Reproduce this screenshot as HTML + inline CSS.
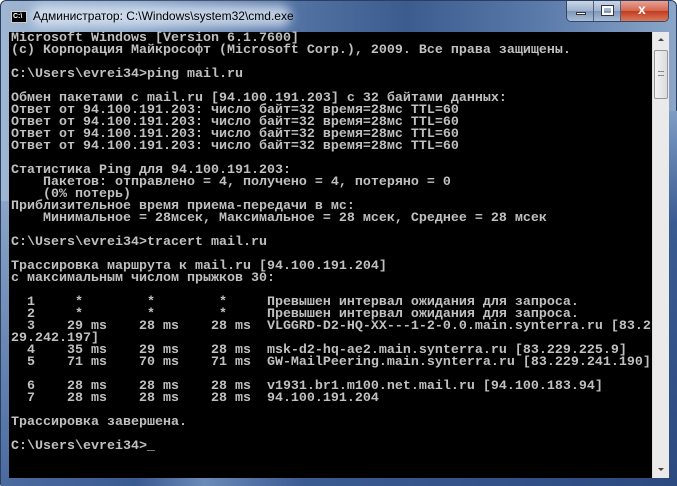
<!DOCTYPE html>
<html><head><meta charset="utf-8"><style>
*{margin:0;padding:0;box-sizing:border-box}
html,body{width:677px;height:486px;overflow:hidden;background:#fff}
.win{position:absolute;left:0;top:0;width:677px;height:486px;border-radius:6px 6px 2px 2px;
background:linear-gradient(90deg,#9fb6d2 0%,#8aa5c8 20%,#5878a8 40%,#3c5c90 60%,#5a7aaa 80%,#8ba6c8 100%);border:1px solid #2a3f5f}
.rb{position:absolute;left:668px;top:110px;width:8px;height:375px;background:linear-gradient(#7f9cc4,#3a5a92 30%,#2c4a80)}
.lb{position:absolute;left:0;top:200px;width:8px;height:285px;background:linear-gradient(#8aa5c8,#4a6aa0)}
.bb{position:absolute;left:0;top:477px;width:677px;height:8px;background:linear-gradient(90deg,#4a6aa0,#3a5a92 20%,#6a8ab8 30%,#3a5a92 45%,#2c4a80)}
.glow{position:absolute;left:30px;top:4px;width:260px;height:22px;border-radius:11px;background:rgba(225,235,245,.75);filter:blur(5px)}
.title{position:absolute;left:32px;top:8px;font:12px "Liberation Sans",sans-serif;color:#000}
.ico{position:absolute;left:10px;top:10px;width:16px;height:12px;background:#000;border:1px solid #ccc;color:#fff;font:bold 7px "Liberation Sans",sans-serif;line-height:10px;padding-left:1px}
.btns{position:absolute;left:565px;top:0;height:21px;width:103px;border:1px solid #33486a;border-top:none;border-radius:0 0 5px 5px;overflow:hidden;display:flex}
.b{height:20px;background:linear-gradient(#c9d6e6,#9db1cc 50%,#7f97b8 51%,#a8bdd6);border-right:1px solid #4c6184;position:relative}
.c{background:linear-gradient(#e8a293,#d4654e 50%,#c23c20 51%,#d87a5a);border:none}
.client{position:absolute;left:8px;top:31px;width:643px;height:446px;background:#000}
pre{position:absolute;left:10px;top:32px;font:bold 13.33px/12px "Liberation Mono","DejaVu Sans Mono",monospace;color:#c0c0c0;letter-spacing:0}
.sb{position:absolute;left:651px;top:31px;width:17px;height:446px;background:#eaeaea;border-left:1px solid #ddd}
.thumb{position:absolute;left:1px;top:18px;width:14px;height:49px;border:1px solid #979797;border-radius:2px;background:linear-gradient(90deg,#f3f3f3,#dcdcdc)}
</style></head><body>
<div class="win">
<div class="rb"></div><div class="lb"></div><div class="bb"></div>
<div class="glow"></div>
<div class="ico">C:\</div>
<div class="title">Администратор: C:\Windows\system32\cmd.exe</div>
<div class="btns">
<div class="b" style="width:28px"><div style="position:absolute;left:9px;top:11px;width:10px;height:3px;background:#fff;border:1px solid #334"></div></div>
<div class="b" style="width:27px"><div style="position:absolute;left:8px;top:5px;width:11px;height:9px;border:2px solid #fff;outline:1px solid #334"></div></div>
<div class="b c" style="width:48px"><div style="position:absolute;left:17px;top:0;font:bold 14px 'Liberation Sans',sans-serif;color:#fff">x</div></div>
</div>
<div class="client"></div>
<div class="sb"><div style="position:absolute;left:5px;top:6px;border:3px solid transparent;border-bottom:3px solid #444;border-top:none;width:0"></div>
<div class="thumb"><div style="position:absolute;left:3px;top:20px;width:6px;height:5px;border-top:1px solid #888;border-bottom:1px solid #888"></div></div>
<div style="position:absolute;left:5px;top:436px;border:3px solid transparent;border-top:3px solid #444;border-bottom:none;width:0"></div></div>
<pre>Microsoft Windows [Version 6.1.7600]
(c) Корпорация Майкрософт (Microsoft Corp.), 2009. Все права защищены.

C:\Users\evrei34>ping mail.ru

Обмен пакетами с mail.ru [94.100.191.203] с 32 байтами данных:
Ответ от 94.100.191.203: число байт=32 время=28мс TTL=60
Ответ от 94.100.191.203: число байт=32 время=28мс TTL=60
Ответ от 94.100.191.203: число байт=32 время=28мс TTL=60
Ответ от 94.100.191.203: число байт=32 время=28мс TTL=60

Статистика Ping для 94.100.191.203:
    Пакетов: отправлено = 4, получено = 4, потеряно = 0
    (0% потерь)
Приблизительное время приема-передачи в мс:
    Минимальное = 28мсек, Максимальное = 28 мсек, Среднее = 28 мсек

C:\Users\evrei34>tracert mail.ru

Трассировка маршрута к mail.ru [94.100.191.204]
с максимальным числом прыжков 30:

  1     *        *        *     Превышен интервал ожидания для запроса.
  2     *        *        *     Превышен интервал ожидания для запроса.
  3    29 ms    28 ms    28 ms  VLGGRD-D2-HQ-XX---1-2-0.0.main.synterra.ru [83.2
29.242.197]
  4    35 ms    29 ms    28 ms  msk-d2-hq-ae2.main.synterra.ru [83.229.225.9]
  5    71 ms    70 ms    71 ms  GW-MailPeering.main.synterra.ru [83.229.241.190]

  6    28 ms    28 ms    28 ms  v1931.br1.m100.net.mail.ru [94.100.183.94]
  7    28 ms    28 ms    28 ms  94.100.191.204

Трассировка завершена.

C:\Users\evrei34>_</pre>
</div>
</body></html>
